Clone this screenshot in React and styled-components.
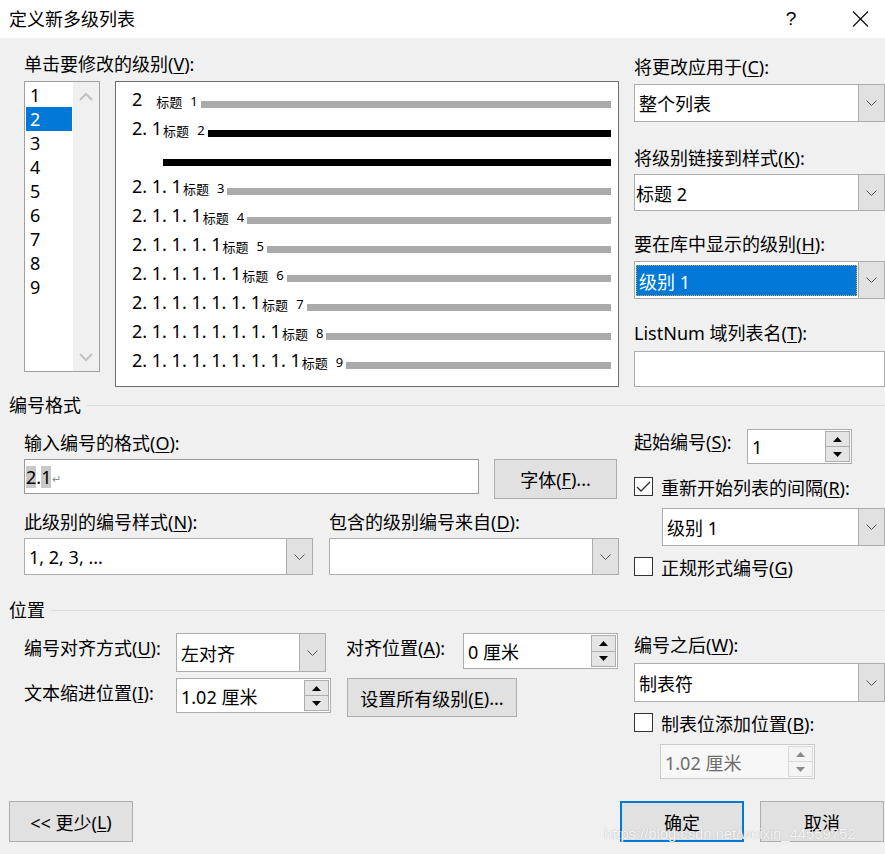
import React from 'react';
import styled, { createGlobalStyle } from 'styled-components';

const GlobalStyle = createGlobalStyle`
  html, body { margin: 0; padding: 0; background: #f0f0f0; }
  body {
    font-family: "Noto Sans", "Noto Sans CJK SC", sans-serif;
    font-size: 18px;
    color: #000;
  }
  * { box-sizing: border-box; }
`;

const Dialog = styled.div`
  width: 885px;
  height: 854px;
  position: relative;
  overflow: hidden;
  background: #f0f0f0;
  display: flex;
  flex-direction: column;
`;

const TitleBar = styled.div`
  height: 38px;
  flex: none;
  background: #fff;
  display: flex;
  align-items: center;
  padding-left: 9px;
`;

const TitleText = styled.div`
  flex: 1;
  font-size: 18px;
  line-height: 24px;
`;

const TitleBtn = styled.div`
  width: ${p => p.$w}px;
  height: 38px;
  display: flex;
  align-items: center;
  justify-content: center;
  font-size: 19px;
  font-family: "Liberation Sans", sans-serif;
`;

const Section = styled.div`
  display: grid;
  grid-template-columns: 595px 251px;
  column-gap: 15px;
  padding-left: 24px;
  padding-top: ${p => p.$pt || 0}px;
  flex: none;
`;

const Column = styled.div`
  display: flex;
  flex-direction: column;
  padding-top: ${p => p.$pt || 0}px;
`;

const Label = styled.div`
  font-size: 18px;
  line-height: 24px;
  height: 24px;
  white-space: nowrap;
  margin-top: ${p => p.$mt || 0}px;
  margin-bottom: ${p => p.$mb || 0}px;
  width: ${p => (p.$w ? `${p.$w}px` : 'auto')};
  flex: none;
  color: ${p => (p.$dim ? '#6d6d6d' : '#000')};
  u { text-decoration: underline; text-underline-offset: 2px; }
`;

const LevelArea = styled.div`
  display: flex;
  gap: 15px;
  margin-top: 5px;
  align-items: flex-start;
`;

const LevelList = styled.div`
  width: 76px;
  height: 291px;
  border: 1px solid #a0a0a0;
  background: #fff;
  display: flex;
  padding: 1px 0 0 1px;
`;

const LevelItems = styled.div`
  width: 47px;
  display: flex;
  flex-direction: column;
`;

const LevelItem = styled.div`
  height: 24px;
  width: 46px;
  line-height: 24px;
  padding-left: 4px;
  font-size: 18px;
  background: ${p => (p.$sel ? '#0078d7' : 'transparent')};
  color: ${p => (p.$sel ? '#fff' : '#000')};
`;

const ScrollTrack = styled.div`
  flex: 1;
  background: #f0f0f0;
  display: flex;
  flex-direction: column;
  justify-content: space-between;
  align-items: center;
  padding: 10px 0 9px 0;
  margin-top: -1px;
`;

const Preview = styled.div`
  width: 504px;
  height: 306px;
  border: 1px solid #6d6d6d;
  background: #fff;
  padding: 0 7px 0 16px;
  display: flex;
  flex-direction: column;
`;

const PreviewRow = styled.div`
  height: 29px;
  display: flex;
  align-items: flex-end;
  padding-bottom: 3px;
  padding-left: ${p => p.$indent || 0}px;
`;

const PreviewNum = styled.span`
  font-size: 18px;
  line-height: 18px;
  white-space: pre;
  font-family: "Noto Sans", sans-serif;
`;

const PreviewHead = styled.span`
  font-family: "Noto Sans CJK SC", sans-serif;
  font-size: 13px;
  line-height: 13px;
  margin-left: ${p => p.$gap}px;
  white-space: nowrap;
  display: flex;
  align-items: flex-end;
`;

const PreviewHeadNum = styled.span`
  margin-left: 8px;
  font-family: "Noto Sans", sans-serif;
  font-size: 13px;
  line-height: 13px;
`;

const Bar = styled.div`
  flex: 1;
  height: 7px;
  margin-left: ${p => p.$ml ?? 3}px;
  background: ${p => (p.$dark ? '#000' : '#aaaaaa')};
`;

const ComboBox = styled.div`
  display: flex;
  flex: none;
  height: ${p => p.$h || 38}px;
  width: ${p => (p.$w ? `${p.$w}px` : 'auto')};
  margin-left: ${p => p.$ml || 0}px;
  margin-top: ${p => p.$mt || 0}px;
  border: 1px solid #adadad;
  background: #fff;
`;

const ComboValue = styled.div`
  flex: 1;
  display: flex;
  align-items: center;
  padding-left: ${p => p.$pl ?? 4}px;
  font-size: 18px;
  white-space: nowrap;
  overflow: hidden;
  ${p => p.$sel && `
    margin: 3px 1px 2px 1px;
    background: #0078d7;
    color: #fff;
    outline: 1px dotted #c9a64a;
    outline-offset: -1px;
  `}
`;

const ComboDrop = styled.div`
  width: 26px;
  flex: none;
  border-left: 1px solid #adadad;
  background: #e1e1e1;
  display: flex;
  align-items: center;
  justify-content: center;
`;

const TextBox = styled.div`
  height: ${p => p.$h || 36}px;
  width: ${p => (p.$w ? `${p.$w}px` : 'auto')};
  border: 1px solid ${p => p.$bc || '#adadad'};
  background: #fff;
  display: flex;
  align-items: center;
  padding-left: 1px;
  margin-top: ${p => p.$mt || 0}px;
  flex: none;
`;

const Hl = styled.span`
  background: ${p => (p.$on ? '#c8c8c8' : 'transparent')};
  font-size: 18px;
  line-height: 22px;
  display: inline-block;
`;

const ReturnMark = styled.span`
  color: #8a8a8a;
  font-size: 11px;
  line-height: 22px;
  margin-left: 1px;
  margin-top: 4px;
`;

const Row = styled.div`
  display: flex;
  align-items: ${p => p.$align || 'flex-start'};
  margin-top: ${p => p.$mt || 0}px;
  margin-left: ${p => p.$ml || 0}px;
`;

const TwoCols = styled.div`
  display: grid;
  grid-template-columns: 289px 290px;
  column-gap: 16px;
  margin-top: ${p => p.$mt || 0}px;
`;

const Button = styled.div`
  width: ${p => p.$w}px;
  height: ${p => p.$h || 40}px;
  margin-left: ${p => p.$ml || 0}px;
  background: #e1e1e1;
  border: ${p => (p.$def ? '2px solid #0078d7' : '1px solid #adadad')};
  display: flex;
  align-items: center;
  justify-content: center;
  font-size: 18px;
  white-space: nowrap;
  flex: none;
  u { text-decoration: underline; text-underline-offset: 2px; }
`;

const SpinBox = styled.div`
  display: flex;
  height: ${p => p.$h || 35}px;
  width: ${p => p.$w}px;
  margin-top: ${p => p.$mt || 0}px;
  margin-left: ${p => p.$ml || 0}px;
  border: 1px solid ${p => (p.$disabled ? '#cccccc' : '#adadad')};
  background: ${p => (p.$disabled ? '#f7f7f7' : '#fff')};
  flex: none;
`;

const SpinValue = styled.div`
  flex: 1;
  display: flex;
  align-items: center;
  padding-left: 4px;
  font-size: 18px;
  white-space: nowrap;
  color: ${p => (p.$disabled ? '#6d6d6d' : '#000')};
`;

const SpinButtons = styled.div`
  width: 26px;
  display: flex;
  flex-direction: column;
  padding: 1px 1px 1px 0;
  gap: 0;
`;

const SpinBtn = styled.div`
  flex: 1;
  border: 1px solid ${p => (p.$disabled ? '#d9d9d9' : '#adadad')};
  background: ${p => (p.$disabled ? '#f4f4f4' : '#e5e5e5')};
  display: flex;
  align-items: center;
  justify-content: center;
  & + & { border-top: none; }
`;

const CheckRow = styled.div`
  display: flex;
  align-items: center;
  height: 19px;
  margin-top: ${p => p.$mt || 0}px;
  gap: 8px;
  font-size: 18px;
  white-space: nowrap;
  u { text-decoration: underline; text-underline-offset: 2px; }
`;

const CheckBoxBox = styled.div`
  width: 19px;
  height: 19px;
  border: 1px solid #333;
  background: #fff;
  display: flex;
  align-items: center;
  justify-content: center;
  flex: none;
`;

const GroupHeader = styled.div`
  display: flex;
  align-items: center;
  height: 24px;
  padding-left: 9px;
  margin-top: ${p => p.$mt || 0}px;
  font-size: 18px;
  line-height: 24px;
  flex: none;
`;

const HeaderLine = styled.div`
  flex: 1;
  height: 1px;
  background: #dcdcdc;
  margin-left: 6px;
`;

const Footer = styled.div`
  display: flex;
  padding: 0 1px 0 9px;
  margin-top: 22px;
  flex: none;
`;

const Spacer = styled.div`
  flex: 1;
`;

const Watermark = styled.div`
  position: absolute;
  left: 604px;
  top: 824px;
  font-family: "Liberation Sans", sans-serif;
  font-size: 15px;
  line-height: 20px;
  color: rgba(255, 255, 255, 0.9);
  text-shadow: 0 0 1px rgba(120, 120, 120, 0.6);
  letter-spacing: -0.1px;
  white-space: nowrap;
  pointer-events: none;
`;

function ChevronDown({ color = '#555', w = 11, h = 6 }) {
  return (
    <svg width={w} height={h} viewBox={`0 0 ${w} ${h}`}>
      <polyline points={`0.5,0.5 ${w / 2},${h - 0.5} ${w - 0.5},0.5`} fill="none" stroke={color} strokeWidth="1" />
    </svg>
  );
}

function ScrollChevron({ up }) {
  return (
    <svg width="14" height="9" viewBox="0 0 14 9">
      <polyline
        points={up ? '1,8 7,2 13,8' : '1,1 7,7 13,1'}
        fill="none"
        stroke="#c2c2c2"
        strokeWidth="2"
      />
    </svg>
  );
}

function Tri({ up, color = '#000' }) {
  return (
    <svg width="9" height="5" viewBox="0 0 9 5">
      <polygon points={up ? '0,5 4.5,0 9,5' : '0,0 4.5,5 9,0'} fill={color} />
    </svg>
  );
}

function Combo({ value, w, h, ml, mt, sel, pl }) {
  return (
    <ComboBox $w={w} $h={h} $ml={ml} $mt={mt}>
      <ComboValue $sel={sel} $pl={pl}>{value}</ComboValue>
      <ComboDrop>
        <ChevronDown />
      </ComboDrop>
    </ComboBox>
  );
}

function Spin({ value, w, h, mt, ml, disabled }) {
  return (
    <SpinBox $w={w} $h={h} $mt={mt} $ml={ml} $disabled={disabled}>
      <SpinValue $disabled={disabled}>{value}</SpinValue>
      <SpinButtons>
        <SpinBtn $disabled={disabled}>
          <Tri up color={disabled ? '#8a8a8a' : '#000'} />
        </SpinBtn>
        <SpinBtn $disabled={disabled}>
          <Tri color={disabled ? '#8a8a8a' : '#000'} />
        </SpinBtn>
      </SpinButtons>
    </SpinBox>
  );
}

function Check({ checked, children, mt }) {
  return (
    <CheckRow $mt={mt}>
      <CheckBoxBox>
        {checked && (
          <svg width="15" height="12" viewBox="0 0 15 12">
            <polyline points="1,6 5,10 14,1" fill="none" stroke="#333" strokeWidth="1.4" />
          </svg>
        )}
      </CheckBoxBox>
      <span>{children}</span>
    </CheckRow>
  );
}

const previewRows = (() => {
  const rows = [{ num: '2', head: '1', gap: 14 }, { num: '2. 1', head: '2', dark: true }, { cont: true }];
  for (let n = 3; n <= 9; n++) {
    rows.push({ num: '2' + '. 1'.repeat(n - 1), head: String(n) });
  }
  return rows;
})();

export default function App() {
  return (
    <>
      <GlobalStyle />
      <Dialog>
        <TitleBar>
          <TitleText>定义新多级列表</TitleText>
          <TitleBtn $w={46}>?</TitleBtn>
          <TitleBtn $w={23} />
          <TitleBtn $w={46}>
            <svg width="17" height="16" viewBox="0 0 17 16">
              <line x1="1" y1="0.5" x2="16" y2="15.5" stroke="#000" strokeWidth="1.1" />
              <line x1="16" y1="0.5" x2="1" y2="15.5" stroke="#000" strokeWidth="1.1" />
            </svg>
          </TitleBtn>
          <TitleBtn $w={2} />
        </TitleBar>

        <Section $pt={14}>
          <Column>
            <Label>单击要修改的级别(<u>V</u>):</Label>
            <LevelArea>
              <LevelList>
                <LevelItems>
                  {['1', '2', '3', '4', '5', '6', '7', '8', '9'].map(n => (
                    <LevelItem key={n} $sel={n === '2'}>{n}</LevelItem>
                  ))}
                </LevelItems>
                <ScrollTrack>
                  <ScrollChevron up />
                  <ScrollChevron />
                </ScrollTrack>
              </LevelList>
              <Preview>
                {previewRows.map((r, i) =>
                  r.cont ? (
                    <PreviewRow key={i} $indent={31}>
                      <Bar $dark $ml={0} />
                    </PreviewRow>
                  ) : (
                    <PreviewRow key={i}>
                      <PreviewNum>{r.num}</PreviewNum>
                      <PreviewHead $gap={r.gap ?? 1}>
                        标题<PreviewHeadNum>{r.head}</PreviewHeadNum>
                      </PreviewHead>
                      <Bar $dark={r.dark} />
                    </PreviewRow>
                  )
                )}
              </Preview>
            </LevelArea>
          </Column>
          <Column $pt={3}>
            <Label $mb={5}>将更改应用于(<u>C</u>):</Label>
            <Combo value="整个列表" h={38} />
            <Label $mt={24} $mb={4}>将级别链接到样式(<u>K</u>):</Label>
            <Combo value="标题 2" h={37} pl={1} />
            <Label $mt={21} $mb={5}>要在库中显示的级别(<u>H</u>):</Label>
            <Combo value="级别 1" h={38} sel pl={3} />
            <Label $mt={22} $mb={6}>ListNum 域列表名(<u>T</u>):</Label>
            <TextBox $h={36} />
          </Column>
        </Section>

        <GroupHeader $mt={6}>
          编号格式
          <HeaderLine />
        </GroupHeader>

        <Section>
          <Column $pt={14}>
            <Label>输入编号的格式(<u>O</u>):</Label>
            <Row $mt={4}>
              <TextBox $w={455} $h={35} $bc="#999999">
                <Hl $on>2</Hl>
                <Hl>.</Hl>
                <Hl $on>1</Hl>
                <ReturnMark>↵</ReturnMark>
              </TextBox>
              <Button $w={123} $h={40} $ml={15}>字体(<u>F</u>)...</Button>
            </Row>
            <TwoCols $mt={11}>
              <Label>此级别的编号样式(<u>N</u>):</Label>
              <Label>包含的级别编号来自(<u>D</u>):</Label>
            </TwoCols>
            <TwoCols $mt={4}>
              <Combo value="1, 2, 3, ..." h={37} />
              <Combo value="" h={37} />
            </TwoCols>
          </Column>
          <Column>
            <Row $mt={12}>
              <Label $w={113} $mt={1}>起始编号(<u>S</u>):</Label>
              <Spin value="1" w={105} h={35} />
            </Row>
            <Check checked mt={13}>
              重新开始列表的间隔(<u>R</u>):
            </Check>
            <Combo value="级别 1" h={38} ml={28} mt={12} />
            <Check mt={11}>
              正规形式编号(<u>G</u>)
            </Check>
          </Column>
        </Section>

        <GroupHeader $mt={22}>
          位置
          <HeaderLine />
        </GroupHeader>

        <Section>
          <Column $pt={11}>
            <Row>
              <Label $w={152} $mt={3}>编号对齐方式(<u>U</u>):</Label>
              <Combo value="左对齐" w={150} h={39} />
              <Label $w={117} $mt={3} style={{ marginLeft: 20 }}>对齐位置(<u>A</u>):</Label>
              <Spin value="0 厘米" w={155} h={36} />
            </Row>
            <Row $mt={6}>
              <Label $w={152} $mt={3}>文本缩进位置(<u>I</u>):</Label>
              <Spin value="1.02 厘米" w={155} h={35} />
              <Button $w={170} $h={39} $ml={16}>设置所有级别(<u>E</u>)...</Button>
            </Row>
          </Column>
          <Column $pt={11}>
            <Label $mb={6}>编号之后(<u>W</u>):</Label>
            <Combo value="制表符" h={39} />
            <Check mt={11}>
              制表位添加位置(<u>B</u>):
            </Check>
            <Spin value="1.02 厘米" w={155} h={35} mt={12} ml={26} disabled />
          </Column>
        </Section>

        <Footer>
          <Button $w={124} $h={41}>
            &lt;&lt; 更少(<u>L</u>)
          </Button>
          <Spacer />
          <Button $w={124} $h={41} $def>确定</Button>
          <Button $w={124} $h={41} $ml={16}>取消</Button>
        </Footer>

        <Watermark>https://blog.csdn.net/weixin_44559752</Watermark>
      </Dialog>
    </>
  );
}
